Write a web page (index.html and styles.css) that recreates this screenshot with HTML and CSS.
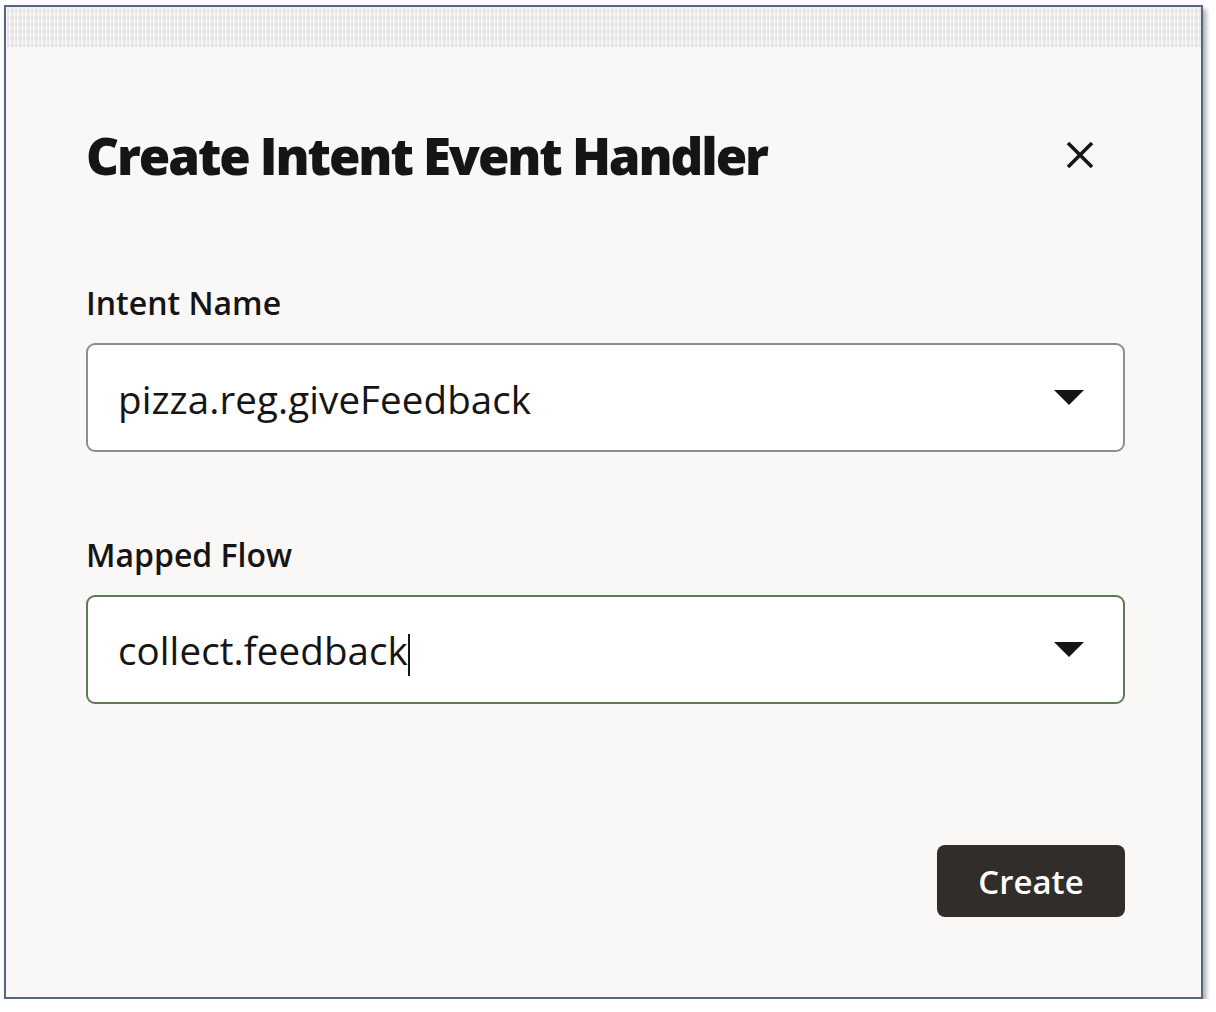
FILE: index.html
```html
<!DOCTYPE html>
<html>
<head>
<meta charset="utf-8">
<link rel="stylesheet" href="styles.css">
</head>
<body>
<div class="frame">
  <div class="texture"></div>
  <div class="dialog">
    <div class="header">
      <h1 class="title">Create Intent Event Handler</h1>
      <button class="close" aria-label="Close">
        <svg width="30" height="30" viewBox="0 0 30 30"><path d="M3 3 L27 27 M27 3 L3 27" stroke="#161513" stroke-width="3.6" fill="none"/></svg>
      </button>
    </div>
    <div class="field">
      <label class="label">Intent Name</label>
      <div class="select">
        <span class="value">pizza.reg.giveFeedback</span>
        <svg class="arrow" width="30" height="15" viewBox="0 0 30 15"><path d="M0 0 H30 L15 15 Z" fill="#161513"/></svg>
      </div>
    </div>
    <div class="field second">
      <label class="label">Mapped Flow</label>
      <div class="select focused">
        <span class="value">collect.feedback<span class="caret"></span></span>
        <svg class="arrow" width="30" height="15" viewBox="0 0 30 15"><path d="M0 0 H30 L15 15 Z" fill="#161513"/></svg>
      </div>
    </div>
    <div class="footer">
      <button class="create">Create</button>
    </div>
  </div>
</div>
</body>
</html>
```
FILE: styles.css
```css
html, body {
  margin: 0;
  padding: 0;
  background: #ffffff;
}
body {
  font-family: "Open Sans", "Noto Sans", sans-serif;
  color: #161513;
}
.frame {
  margin: 5px 0 0 4px;
  width: 1195px;
  height: 990px;
  border: 2px solid #56667f;
  background: #f9f8f6;
  box-shadow: 3px 4px 5px rgba(0, 0, 0, 0.35);
  display: flex;
  flex-direction: column;
}
.texture {
  height: 40px;
  background-color: #ecebe9;
  background-image:
    repeating-linear-gradient(90deg, rgba(255,255,255,0.8) 0 1px, transparent 1px 3px, rgba(255,255,255,0.6) 3px 5px, transparent 5px 8px),
    repeating-linear-gradient(0deg, rgba(218,217,215,0.5) 0 3px, transparent 3px 7px);
}
.dialog {
  flex: 1;
  padding: 0 76px 0 80px;
  display: flex;
  flex-direction: column;
}
.header {
  display: flex;
  align-items: center;
  justify-content: space-between;
  margin-top: 76px;
}
.title {
  margin: 0;
  font-size: 51px;
  font-weight: 800;
  line-height: 64px;
  letter-spacing: -2.1px;
  color: #161513;
}
.close {
  border: 0;
  background: none;
  padding: 0;
  margin-right: 30px;
  width: 30px;
  height: 30px;
  display: flex;
}
.field {
  margin-top: 96px;
  display: flex;
  flex-direction: column;
}
.field.second {
  margin-top: 83px;
}
.label {
  font-size: 32px;
  font-weight: 600;
  line-height: 40px;
  color: #161513;
}
.select {
  margin-top: 20px;
  height: 109px;
  box-sizing: border-box;
  border: 2px solid #8f8e8c;
  border-radius: 9px;
  background: #ffffff;
  display: flex;
  align-items: center;
  justify-content: space-between;
  padding: 0 39px 0 30px;
}
.select.focused {
  border-color: #5e7a52;
}
.value {
  font-size: 38.5px;
  line-height: 50px;
  letter-spacing: 0.1px;
  color: #161513;
  position: relative;
  top: 1px;
}
.caret {
  display: inline-block;
  width: 2px;
  height: 42px;
  background: #161513;
  vertical-align: middle;
  margin-left: 0;
}
.arrow {
  display: block;
}
.footer {
  margin-top: auto;
  margin-bottom: 80px;
  display: flex;
  justify-content: flex-end;
}
.create {
  width: 188px;
  height: 72px;
  border: 0;
  border-radius: 8px;
  background: #312d2a;
  color: #ffffff;
  font-family: "Open Sans", "Noto Sans", sans-serif;
  font-size: 33px;
  font-weight: 600;
  padding: 0;
}
```
